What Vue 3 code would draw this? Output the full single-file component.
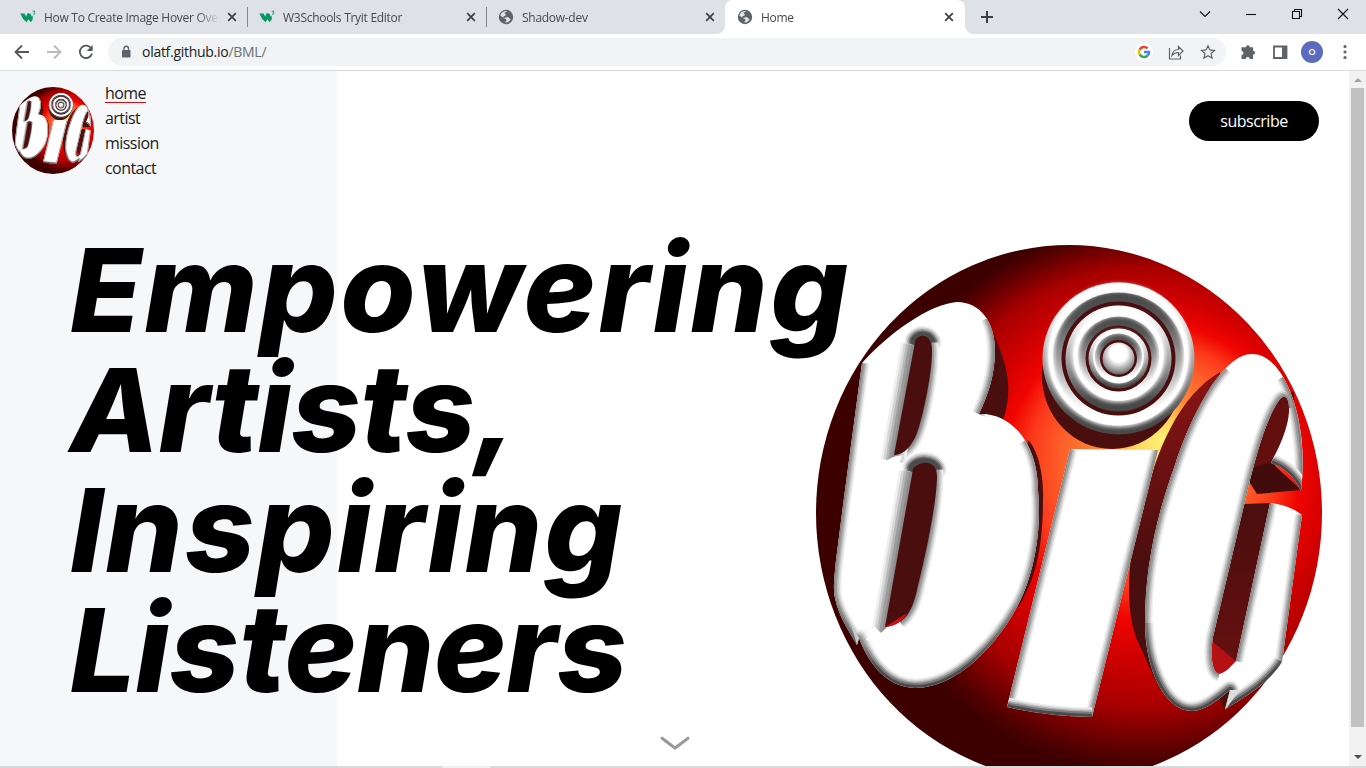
<script setup>
const tabs = [
  { title: 'How To Create Image Hover Overlay', icon: 'w3' },
  { title: 'W3Schools Tryit Editor', icon: 'w3' },
  { title: 'Shadow-dev', icon: 'globe' },
  { title: 'Home', icon: 'globe', active: true },
]
const links = ['home', 'artist', 'mission', 'contact']
const lines = [
  { text: 'Empowering', cls: 'l1' },
  { text: 'Artists,', cls: 'l2' },
  { text: 'Inspiring', cls: 'l3' },
  { text: 'Listeners', cls: 'l4' },
]

const faceB = 'M862 363C890 332 930 304 957 302C980 302 995 322 995 350C995 375 988 395 979 414C1012 412 1038 445 1038 490C1042 530 1034 575 1018 605C1000 640 960 688 915 688C885 687 868 662 859 638L857 645C850 633 838 615 835 598C833 590 834 580 836 560L845 490Z'
const faceI = 'M1070 449L1158 450L1092 717Q1045 716 1007 707Z'
const faceG = 'M1252 354C1275 354 1291 385 1298 417C1303 440 1304 465 1301 491C1294 477 1285 468 1271 463C1278 450 1290 425 1289 408C1289 398 1285 394 1280 399C1268 415 1259 445 1250 480L1213 637C1210 655 1212 673 1219 674C1226 673 1232 665 1236 661L1270 503Q1290 505 1302 515L1282 662C1268 685 1240 700 1225 709L1230 690C1220 698 1206 711 1192 711C1165 711 1145 670 1145 623C1145 570 1155 520 1175 465C1195 405 1225 354 1252 354Z'

const lowB = 'M835 598C838 615 850 633 857 645L859 638C868 662 885 687 915 688C960 688 1000 640 1018 605'
const sideB = 'M862 363L845 490L836 560C834 580 833 590 835 598C838 615 850 633 857 645M988 318C1000 345 995 380 979 414M1026 440C1038 460 1038 480 1038 490C1042 530 1034 575 1018 605C1000 640 960 688 915 688'
const sideI = 'M1070 449L1007 707M1158 450L1092 717'
const lowI = 'M1007 707Q1045 716 1092 717'
const sideG = 'M1283 377C1300 405 1304 465 1301 491M1289 408C1289 398 1285 394 1280 399C1268 415 1259 445 1250 480L1213 637C1210 655 1212 673 1219 674M1236 661L1270 503M1302 515L1282 662M1192 711C1165 711 1145 670 1145 623C1145 570 1155 520 1175 465C1188 426 1205 390 1225 368'
const lowG = 'M1282 662C1268 685 1240 700 1225 709L1230 690C1220 698 1206 711 1192 711C1165 711 1145 670 1145 623'
const serif = 'M1301 491C1294 477 1285 468 1271 463'

const sideLayers = [[15, '#f0f0f0'], [12, '#d9d9d9'], [9, '#bcbcbc'], [6, '#9b9b9b'], [2, '#808080']]
const lowLayers = [[19, '#eee'], [16, '#d4d4d4'], [13, '#aaa'], [10, '#7c7c7c'], [6, '#4b4b4b']]
const wallLayers = [[25, '#efefef'], [20, '#d6d6d6'], [15, '#b8b8b8'], [10, '#9c9c9c'], [4, '#8c8c8c']]
const capLayers = [[23, '#eee'], [20, '#d0d0d0'], [17, '#a4a4a4'], [14, '#707070'], [11, '#4b4b4b']]
const letters = [
  { id: 'b', face: faceB, side: sideB, low: lowB },
  { id: 'i', face: faceI, side: sideI, low: lowI },
  { id: 'g', face: faceG, side: sideG, low: lowG },
]
const holes = [
  {
    shape: 'M915 342C917 333 933 332 932 352C932 375 922 420 917 433C912 445 905 455 894 455Z',
    wall: 'M893 461L913.500 345',
    right: 'M931 343C933 375 922 420 917 433C914 441 909 448 903 452',
    cap: 'M916 341C920 336 927 336 930 342',
    foot: 'M870 475L884 463Q892 455 902 455.500L896 475Z',
  },
  {
    shape: 'M913 469C920 460 938 459 937 478C936 510 922 570 917 590C912 612 905 624 885 627Z',
    wall: 'M884 633L911.500 472',
    right: 'M936 470C937 510 922 570 917 590C914 604 908 616 900 622',
    cap: 'M914 468C920 462 931 462 935 469',
    foot: 'M866 640L874 626L881 633L887 627L900 624L900 645Z',
  },
]
const rings = [
  { r: 76, mid: 68, w: 7, inner: 66, dark: 57, up: 3 },
  { r: 53, mid: 43, w: 7, inner: 42, dark: 33, up: 3 },
  { r: 30, mid: 24.5, w: 3, inner: 25, dark: 18.5, up: 2 },
]
</script>

<template>
  <div class="window">
    <header class="tabstrip">
      <div v-for="(t, i) in tabs" :key="t.title" class="tab" :class="{ active: t.active, ruled: i < 2 }">
        <svg v-if="t.icon === 'w3'" class="fav" viewBox="0 0 16 16">
          <path d="M.3 4.500H4.600l1.500 3.200L7.300 4.500h3l1.500 3.300 1-1.400v3.900L10.800 13.200 8.400 10.200 6.500 13.200 3 9.800Z" fill="#059862" />
          <path d="M12.700 2.200h2.300l-1.100 1.300c1.600.2 1.300 2.100-.9 1.700" fill="none" stroke="#059862" stroke-width=".9" />
        </svg>
        <svg v-else class="fav" viewBox="0 0 16 16">
          <circle cx="8" cy="8" r="7.200" fill="#5f6368" />
          <path d="M9 2.200C6.800 1.700 3.200 3 2.300 6.500L5.600 9c1.500.2 2.100-1 3.700-1 1.800.2 1.800 1.900 3.400 1.900-.9 2.400-3 3.700-5.300 3.700-.3-1.500 1.200-1.500 1-2.900-.4-1.500-2.600-.8-3.200-2.200-.2-1.800 2.400-1.300 2.500-2.600.1-1.300-1.600-1.200-.9-2.300.5-.8 1.700-.4 2.200-1.400Z" fill="#dee1e6" />
        </svg>
        <span class="title">{{ t.title }}</span>
        <svg class="close" viewBox="0 0 10 10"><path d="M1.200 1.200l7.600 7.600M8.800 1.200L1.200 8.800" /></svg>
      </div>
      <svg class="plus" viewBox="0 0 12 12"><path d="M6 0v12M0 6h12" /></svg>
      <div class="controls">
        <svg viewBox="0 0 12 12"><path d="M1 3.500l5 5 5-5" /></svg>
        <svg viewBox="0 0 12 12"><path d="M1 6.500h10" /></svg>
        <svg viewBox="0 0 12 12"><path d="M1.500 3.500h7v7h-7zM3.500 3.500v-2h7v7h-2" /></svg>
        <svg viewBox="0 0 12 12"><path d="M1 1l10 10M11 1L1 11" /></svg>
      </div>
    </header>

    <div class="toolbar">
      <svg class="nav" viewBox="0 0 16 16"><path d="M15 8H2M8 1.500L1.500 8 8 14.500" stroke="#54585c" /></svg>
      <svg class="nav" viewBox="0 0 16 16"><path d="M1 8h13M8 1.500L14.500 8 8 14.500" stroke="#babcbe" /></svg>
      <svg class="nav" viewBox="0 0 16 16">
        <path d="M13.300 4.600A6.200 6.200 0 1 0 14 9.500" stroke="#54585c" /><path d="M14.700 1v6h-6z" fill="#54585c" />
      </svg>
      <div class="omnibox">
        <svg class="lock" viewBox="0 0 10 14">
          <rect x="1" y="5" width="8.500" height="7.500" rx="1" fill="#5f6368" />
          <path d="M3 5V3.500a2.250 2.250 0 0 1 4.500 0V5" fill="none" stroke="#5f6368" stroke-width="1.300" />
        </svg>
        <span class="url">olatf.github.io<i>/BML/</i></span>
        <svg class="act google" viewBox="0 0 20 20">
          <circle cx="10" cy="10" r="9" fill="#fff" />
          <g fill="none" stroke-width="2.500">
            <path d="M13.500 6.300A5 5 0 0 0 5.600 7.700" stroke="#ea4335" />
            <path d="M5.600 7.700a5 5 0 0 0 0 4.600" stroke="#fbbc05" />
            <path d="M5.600 12.300a5 5 0 0 0 7.800 1.400" stroke="#34a853" />
            <path d="M13.400 13.700A5 5 0 0 0 15 10h-5" stroke="#4285f4" />
          </g>
        </svg>
        <svg class="act" viewBox="0 0 18 18">
          <path d="M2.500 5v11h11v-3.500M5 12.500c.5-4 3-6 6.500-6V3.500L16 8l-4.500 4.500v-3C8.500 9.500 6.500 10.500 5 12.500Z" />
        </svg>
        <svg class="act" viewBox="0 0 18 18">
          <path d="M9 2.700l1.900 4.200 4.600.5-3.400 3.100.9 4.500L9 12.700 5 15l.9-4.500-3.400-3.100 4.600-.5Z" stroke-width="1.500" />
        </svg>
      </div>
      <svg class="ext" viewBox="0 0 16 16">
        <path d="M6 3.200a1.900 1.900 0 0 1 3.800 0H13v3.600a2 2 0 0 1 0 4V15H9.700a2 2 0 0 0-4 0H1.500v-4a2 2 0 0 0 0-4V3.200Z" fill="#5f6368" />
      </svg>
      <svg class="ext" viewBox="0 0 16 16">
        <path d="M2 2.500h12.500v11.500H2z" fill="none" stroke="#5f6368" stroke-width="1.800" /><path d="M10 2h5v12h-5z" fill="#5f6368" />
      </svg>
      <span class="avatar">O</span>
      <svg class="dots" viewBox="0 0 4 16">
        <circle cx="2" cy="2.500" r="1.600" /><circle cx="2" cy="8" r="1.600" /><circle cx="2" cy="13.500" r="1.600" />
      </svg>
    </div>

    <main class="page">
      <div class="side"></div>
      <div class="content">
        <div class="top">
          <svg class="small" viewBox="816 245 506 536" preserveAspectRatio="none"><use href="#logo" /></svg>
          <nav class="links">
            <a v-for="(l, i) in links" :key="l" :class="{ on: i === 0 }"><span>{{ l }}</span></a>
          </nav>
          <button class="sub">subscribe</button>
        </div>
        <h1 class="headline">
          <span v-for="l in lines" :key="l.text" :class="l.cls">{{ l.text }}</span>
        </h1>
      </div>

      <svg class="big" viewBox="816 245 506 536">
        <defs>
          <radialGradient id="ball" gradientUnits="userSpaceOnUse" cx="1142" cy="499" r="274" fx="1162" fy="440">
            <stop offset="0" stop-color="#fff078" /><stop offset=".09" stop-color="#ffd65c" />
            <stop offset=".2" stop-color="#ff8a3a" /><stop offset=".34" stop-color="#fe6029" />
            <stop offset=".45" stop-color="#fb391b" /><stop offset=".54" stop-color="#f00500" />
            <stop offset=".66" stop-color="#cf0000" /><stop offset=".8" stop-color="#a80000" />
            <stop offset=".95" stop-color="#520000" /><stop offset="1" stop-color="#3c0000" />
          </radialGradient>
          <linearGradient id="depth" x1="0" y1="0" x2="0" y2="1">
            <stop offset="0" stop-color="#8c1414" /><stop offset=".6" stop-color="#4b0e0e" /><stop offset="1" stop-color="#4b0e0e" />
          </linearGradient>
          <linearGradient id="hole" x1="0" y1="0" x2="0" y2="1">
            <stop offset="0" stop-color="#4b0e0e" /><stop offset="1" stop-color="#681010" />
          </linearGradient>
          <linearGradient id="out" x1="0" y1="0" x2="0" y2="1">
            <stop offset="0" stop-color="#fff" /><stop offset=".25" stop-color="#e0e0e0" />
            <stop offset=".6" stop-color="#8c8c8c" /><stop offset=".9" stop-color="#484848" />
          </linearGradient>
          <linearGradient id="inn" x1="0" y1="0" x2="0" y2="1">
            <stop offset="0" stop-color="#484848" /><stop offset=".2" stop-color="#555" />
            <stop offset=".55" stop-color="#a8a8a8" /><stop offset=".9" stop-color="#fff" />
          </linearGradient>
          <radialGradient id="bead" cx=".5" cy=".35" r=".65">
            <stop offset=".4" stop-color="#fff" /><stop offset="1" stop-color="#666" />
          </radialGradient>
          <linearGradient id="fade" gradientUnits="userSpaceOnUse" x1="0" y1="598" x2="0" y2="668">
            <stop offset="0" stop-color="#000" /><stop offset="1" stop-color="#fff" />
          </linearGradient>
          <mask id="fall" maskUnits="userSpaceOnUse" x="800" y="230" width="540" height="560">
            <rect x="800" y="230" width="540" height="560" fill="url(#fade)" />
          </mask>
          <filter id="soft" filterUnits="userSpaceOnUse" x="800" y="230" width="540" height="560"><feGaussianBlur stdDeviation="2" /></filter>
          <filter id="fine" filterUnits="userSpaceOnUse" x="800" y="230" width="540" height="560"><feGaussianBlur stdDeviation=".7" /></filter>
          <clipPath v-for="l in letters" :id="'clip-' + l.id" :key="l.id"><path :d="l.face" /></clipPath>
        </defs>
        <g id="logo">
          <ellipse cx="1069" cy="513" rx="253" ry="268" fill="url(#ball)" />
          <path d="M990 325C1003 357 1016 382 1003 420L975 420ZM1028 440C1038 450 1044 475 1043 500C1043 545 1036 580 1018 607Z" fill="#4b0e0e" />
          <ellipse cx="1112" cy="376" rx="70" ry="73" fill="#4b0e0e" />
          <path d="M1220 372C1180 395 1155 450 1143 510L1131 557C1127 590 1129 620 1137 640L1160 690L1225 620Z" fill="url(#depth)" />
          <path d="M1216 691L1225 710L1232 690Z" fill="#4b0e0e" />
          <path d="M1276 392L1294 392L1294 425L1275 466L1262 470L1246 480Z" fill="#640f0f" />
          <path d="M1255 467L1271 462L1301 490L1257 494L1248 480Z" fill="#430c0c" />
          <path d="M1244 504L1272 503L1240 670L1208 680L1208 640Z" fill="url(#hole)" />
          <path d="M1212 641L1237 662L1222 676L1210 672Z" fill="#b51014" />
          <g v-for="l in letters" :key="l.id">
            <path :d="l.face" fill="#fff" />
            <g :clip-path="`url(#clip-${l.id})`">
              <g fill="none" stroke-linejoin="round" filter="url(#fine)">
                <path v-for="s in sideLayers" :key="s[0]" :d="l.side" :stroke="s[1]" :stroke-width="s[0]" />
                <path v-if="l.id === 'i'" :d="l.low" stroke="#ccc" stroke-width="16" />
                <g mask="url(#fall)">
                  <path v-for="s in lowLayers" :key="s[0]" :d="l.low" :stroke="s[1]" :stroke-width="s[0]" />
                </g>
                <template v-if="l.id === 'g'">
                  <path v-for="s in lowLayers" :key="s[0]" :d="serif" :stroke="s[1]" :stroke-width="s[0]" />
                </template>
              </g>
            </g>
          </g>
          <g v-for="h in holes" :key="h.cap">
            <g fill="none" filter="url(#fine)">
              <path v-for="s in capLayers" :key="s[0]" :d="h.cap" :stroke="s[1]" :stroke-width="s[0]" stroke-linecap="round" />
              <path v-for="s in sideLayers" :key="s[0]" :d="h.right" :stroke="s[1]" :stroke-width="s[0]" />
              <path v-for="s in wallLayers" :key="s[0]" :d="h.wall" :stroke="s[1]" :stroke-width="s[0]" />
            </g>
            <path :d="h.foot" fill="#fff" />
            <path :d="h.shape" fill="#4b0e0e" />
          </g>
          <path d="M885 627L907 613Q900 626 885 627Z" fill="#cc1114" />
          <path d="M851 624L857 645L859 638Z" fill="#c9c9c9" />
          <path d="M1230 690L1225 710L1240 690Z" fill="#ddd" />
          <g v-for="k in rings" :key="k.r">
            <circle cx="1118.500" cy="358.500" :r="k.r" fill="url(#out)" />
            <circle cx="1118.500" cy="358.500" :r="k.inner" fill="url(#inn)" />
            <circle cx="1118.500" :cy="358.5 - k.up" :r="k.mid" fill="none" stroke="#fff" :stroke-width="k.w" filter="url(#soft)" />
            <circle cx="1118.500" :cy="358.5 - k.up" :r="k.mid" fill="none" stroke="#fff" :stroke-width="k.w * .6" filter="url(#fine)" />
            <circle cx="1118.500" cy="358.500" :r="k.dark" fill="#4b0e0e" />
          </g>
          <circle cx="1118.500" cy="358.500" r="16" fill="url(#bead)" />
        </g>
      </svg>

      <svg class="down" viewBox="0 0 32 16"><path d="M3 3.200L16 13 29 3.200" /></svg>
      <aside class="scroll">
        <svg viewBox="0 0 8 4"><path d="M0 4L4 0l4 4z" fill="#a3a3a3" /></svg>
        <div class="thumb"></div>
        <svg viewBox="0 0 8 4"><path d="M0 0l4 4 4-4z" fill="#505050" /></svg>
      </aside>
    </main>
    <div class="edge"></div>
  </div>
</template>

<style>
body { overflow: hidden; }
</style>
<style scoped>
* { box-sizing: border-box; }
.window { width: 1366px; height: 768px; display: flex; flex-direction: column; overflow: hidden; background: #fff; font-family: "Open Sans", "Noto Sans", sans-serif; }
svg { display: block; flex: none; }
.tabstrip { height: 34px; flex: none; background: #dee1e6; display: flex; align-items: center; padding-left: 8px; }
.tab { width: 239px; height: 34px; display: flex; align-items: center; padding: 0 10px 0 12px; position: relative; }
.tab.ruled::after { content: ""; position: absolute; right: -1px; top: 7px; width: 1px; height: 20px; background: #85888c; }
.tab.active { width: 240px; padding-right: 11px; background: #fff; border-radius: 8px 8px 0 0; }
.tab.active::before, .tab.active::after { content: ""; position: absolute; bottom: 0; width: 8px; height: 8px; }
.tab.active::before { left: -8px; background: radial-gradient(circle at 0 0, transparent 7.500px, #fff 8px); }
.tab.active::after { right: -8px; background: radial-gradient(circle at 100% 0, transparent 7.500px, #fff 8px); }
.fav { width: 16px; height: 16px; margin-right: 8px; }
.title { flex: 1; font-size: 12px; letter-spacing: -.28px; color: #45494d; white-space: nowrap; overflow: hidden; mask-image: linear-gradient(90deg, #000 calc(100% - 22px), transparent); }
.close { width: 10px; height: 10px; margin-left: 8px; }
.close path { stroke: #3c4043; stroke-width: 1.700; }
.plus { width: 12px; height: 12px; margin-left: 16px; }
.plus path { stroke: #3c4043; stroke-width: 2; }
.controls { margin-left: auto; display: flex; gap: 34px; padding: 0 17px 6px 0; }
.controls svg { width: 12px; height: 12px; }
.controls path { fill: none; stroke: #111; stroke-width: 1.100; }
.toolbar { height: 37px; flex: none; display: flex; align-items: center; padding: 0 19px 1px 14px; border-bottom: 1px solid #d9dadc; background: #fff; }
.nav { width: 16px; height: 16px; margin-right: 16px; }
.nav path { stroke-width: 1.800; }
.nav path:first-child { fill: none; }
.omnibox { width: 1118px; height: 28px; margin-left: -2px; border-radius: 14px; background: #f1f3f4; display: flex; align-items: center; padding: 0 9px 0 13px; }
.lock { width: 10px; height: 14px; }
.url { font-size: 14px; letter-spacing: -.28px; color: #202124; margin: 0 auto 0 11px; }
.url i { font-style: normal; color: #6c7075; }
.act { width: 18px; height: 18px; margin-left: 14px; }
.act > path { fill: none; stroke: #5f6368; stroke-width: 1.200; }
.act.google { width: 20px; height: 20px; margin-right: -1px; }
.ext { width: 16px; height: 16px; margin-left: 14px; }
.ext + .ext { margin-left: 16px; }
.avatar { width: 22px; height: 22px; margin-left: 13px; border-radius: 50%; background: #5c6bc0; color: #fff; font-size: 9px; font-weight: 600; display: grid; place-items: center; }
.dots { width: 4px; height: 16px; margin-left: auto; fill: #5f6368; }
.page { flex: 1; display: grid; grid-template-columns: 337px 1fr 17px; min-height: 0; position: relative; overflow: hidden; }
.side { background: #f6f7f9; grid-area: 1 / 1; }
.content { grid-area: 1 / 1 / 2 / 3; position: relative; }
.top { display: flex; height: 157px; padding: 10px 30px 0 12px; align-items: flex-start; }
.small { width: 82px; height: 87px; margin: 6px 11px 0 0; }
.links { display: flex; flex-direction: column; }
.links a { height: 25px; line-height: 25px; font-size: 16px; letter-spacing: -.55px; color: #1b1b1b; }
.links span { display: inline-block; line-height: 18px; }
.links .on span { border-bottom: 1px solid #d40d12; }
.sub { margin: 20px 0 0 auto; width: 130px; height: 40px; border: 0; border-radius: 20px; background: #000; color: #fff; font: 16px "Open Sans", sans-serif; letter-spacing: -.5px; }
.headline { margin: 0 0 0 70px; font: italic 800 122px/120px Inter, sans-serif; color: #000; }
.headline span { display: block; height: 120px; white-space: nowrap; width: max-content; }
.headline span::first-letter { font-size: 116px; }
.l1 { letter-spacing: 2.600px; }
.l2 { letter-spacing: -.8px; }
.l3 { letter-spacing: 2.200px; }
.l4 { letter-spacing: -.3px; }
.big { position: absolute; left: 816px; top: 174px; width: 506px; height: 536px; }
.down { position: absolute; left: 659px; top: 664px; width: 32px; height: 16px; }
.down path { fill: none; stroke: #999; stroke-width: 3; stroke-linecap: round; }
.scroll { grid-area: 1 / 3; background: #f1f1f1; display: flex; flex-direction: column; align-items: center; padding: 7px 2px 7px; }
.scroll svg { width: 8px; height: 4px; }
.thumb { width: 13px; height: 639px; margin: 6px 0 auto; background: #c1c1c1; }
.edge { height: 2px; flex: none; background: linear-gradient(90deg, #d9d9d9 442px, #f0f0f0 442px 490px, #d9d9d9 490px); }
</style>
